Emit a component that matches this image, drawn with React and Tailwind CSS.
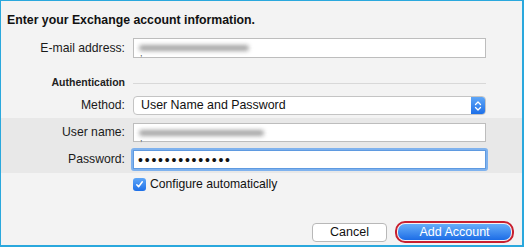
import React from "react";

const font = { fontFamily: '"Liberation Sans", Arial, sans-serif' };

function Label({ children }) {
  return (
    <div className="w-[125px] shrink-0 text-right text-[12.2px] text-[#1a1a1a] pr-[1px]">
      {children}
    </div>
  );
}

function Blurred({ w }) {
  return (
    <span className="relative flex items-center h-full pl-[5px]">
      <span
        className="block h-[6px] rounded-full bg-[#8f8f8f] blur-[2px] opacity-80"
        style={{ width: w }}
      />
      <span className="absolute left-[6px] top-[10px] text-[9px] leading-none text-[#555]">,</span>
    </span>
  );
}

export default function App() {
  return (
    <div
      className="w-[524px] h-[247px] bg-[#f3f3f3] border-t border-l border-r-2 border-b-2 border-[#2aa8dd] flex flex-col overflow-hidden"
      style={font}
    >
      <div className="pl-[6px] pt-[11px] text-[12.3px] font-bold text-[#111] leading-[16px]">
        Enter your Exchange account information.
      </div>

      <div className="flex items-center mt-[10px] h-[20px]">
        <Label>E-mail address:</Label>
        <div className="ml-[7px] w-[353px] h-[20px] bg-white border border-[#bdbdbd]">
          <Blurred w={110} />
        </div>
      </div>

      <div className="flex items-center mt-[18px] h-[14px]">
        <div className="w-[125px] shrink-0 text-right text-[10.5px] font-bold text-[#222] pr-[1px]">
          Authentication
        </div>
        <div className="ml-[7px] w-[353px] h-px bg-[#d8d8d8]" />
      </div>

      <div className="flex items-center mt-[6px] h-[19px]">
        <Label>Method:</Label>
        <div className="ml-[7px] w-[353px] h-[19px] bg-white border border-[#c4c4c4] rounded-[4px] flex items-center overflow-hidden">
          <span className="pl-[7px] text-[12.4px] text-[#111] flex-1">User Name and Password</span>
          <div className="w-[14px] h-full bg-gradient-to-b from-[#5ea6f7] to-[#1c6fe8] flex items-center justify-center">
            <svg width="8" height="12" viewBox="0 0 8 12" fill="none" stroke="white" strokeWidth="1.3" strokeLinecap="round" strokeLinejoin="round">
              <path d="M1.5 4.5 L4 2 L6.5 4.5" />
              <path d="M1.5 7.5 L4 10 L6.5 7.5" />
            </svg>
          </div>
        </div>
      </div>

      <div className="mt-[3px] bg-[#e8e8e8] flex flex-col pt-[5px] pb-[2px]">
        <div className="flex items-center h-[19px]">
          <Label>User name:</Label>
          <div className="ml-[7px] w-[353px] h-[19px] bg-white border border-[#bdbdbd]">
            <Blurred w={125} />
          </div>
        </div>
        <div className="flex items-center mt-[6px] h-[23px]">
          <Label>Password:</Label>
          <div className="ml-[5px] w-[357px] h-[23px] rounded-[3px] border-[2px] border-[#7fb2ee] bg-[#a9cbf3] p-0">
            <div className="w-full h-full bg-white border border-[#5f9ae0] flex items-center pl-[4px] text-[14px] leading-none text-[#111] tracking-[1.8px]">
              ••••••••••••••
            </div>
          </div>
        </div>
      </div>

      <div className="flex items-center mt-[4px] h-[14px]">
        <div className="w-[132px] shrink-0" />
        <div className="w-[13px] h-[13px] rounded-[3px] bg-gradient-to-b from-[#5ea6f7] to-[#1c6fe8] flex items-center justify-center">
          <svg width="9" height="9" viewBox="0 0 9 9" fill="none" stroke="white" strokeWidth="1.5" strokeLinecap="round" strokeLinejoin="round">
            <path d="M1.8 4.8 L3.6 6.8 L7.3 1.8" />
          </svg>
        </div>
        <span className="ml-[4px] text-[12.2px] text-[#111]">Configure automatically</span>
      </div>

      <div className="flex-1" />

      <div className="flex items-center justify-end pr-[8px] pb-[2px] gap-[8px]">
        <div className="w-[75px] h-[19px] bg-white border border-[#b8b8b8] rounded-[4px] flex items-center justify-center text-[12.5px] text-[#111]">
          Cancel
        </div>
        <div className="w-[119px] h-[22px] rounded-[10px] border-[2px] border-[#c8202f] bg-[#f3f3f3] p-px">
          <div className="w-full h-full rounded-[7px] bg-gradient-to-b from-[#66adf8] to-[#1b6ce6] flex items-center justify-center text-[12.5px] text-white">
            Add Account
          </div>
        </div>
      </div>
    </div>
  );
}
